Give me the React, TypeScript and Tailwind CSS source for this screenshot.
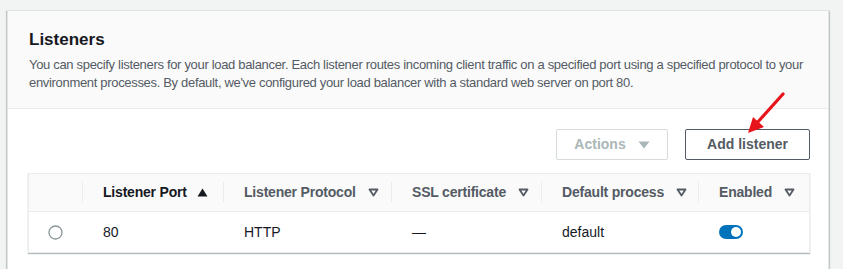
import React from "react";

const font = { fontFamily: '"Liberation Sans", Arial, sans-serif' };

function SortDown() {
  return (
    <svg width="11" height="9" viewBox="0 0 11 9" className="ml-[12px] shrink-0">
      <path d="M1.5 1.5 H9.5 L5.5 7.5 Z" fill="none" stroke="#545b64" strokeWidth="1.8" strokeLinejoin="round" />
    </svg>
  );
}

function SortUp() {
  return (
    <svg width="11" height="9" viewBox="0 0 11 9" className="ml-[10px] shrink-0">
      <path d="M5.5 0.5 L10.5 8.5 H0.5 Z" fill="#16191f" />
    </svg>
  );
}

function HeaderCell({ label, active, divider = true }: { label: string; active?: boolean; divider?: boolean }) {
  return (
    <div className="relative flex items-center pl-[21px] h-full">
      {divider && <div className="absolute left-0 top-[8px] h-[20px] w-px bg-[#eaeded]" />}
      <span className={`text-[14px] font-bold tracking-[-0.2px] ${active ? "text-[#16191f]" : "text-[#545b64]"}`}>{label}</span>
      {active ? <SortUp /> : <SortDown />}
    </div>
  );
}

export default function App() {
  return (
    <div style={font} className="relative w-[843px] h-[269px] overflow-hidden bg-[#f2f3f3] pt-[10px] pl-[7px] pr-[14px]">
      <div className="h-[300px] bg-white border border-[#e1e4e4] shadow-[0_1px_1px_0_rgba(0,28,36,0.3),1px_1px_1px_0_rgba(0,28,36,0.15),-1px_1px_1px_0_rgba(0,28,36,0.15)]">
        <div className="bg-[#fafafa] border-b border-[#eaeded] pl-[21px] pr-[8px] pt-[18px] pb-[16px]">
          <h2 className="text-[17px] leading-[22px] font-bold text-[#16191f]">Listeners</h2>
          <p className="mt-[5px] text-[13px] leading-[18px] tracking-[-0.32px] text-[#545b64]">
            You can specify listeners for your load balancer. Each listener routes incoming client traffic on a specified port using a specified protocol to your environment processes. By default, we've configured your load balancer with a standard web server on port 80.
          </p>
        </div>
        <div className="pl-[20px] pr-[18px] pt-[20px]">
          <div className="flex justify-end gap-[17px]">
            <button className="h-[31px] w-[112px] flex items-center justify-center gap-[12px] border border-[#d5dbdb] rounded-[2px] bg-white text-[14px] font-bold text-[#aab7b8]">
              Actions
              <svg width="12" height="8" viewBox="0 0 12 8">
                <path d="M0.5 0.5 H11.5 L6 7.5 Z" fill="#aab7b8" />
              </svg>
            </button>
            <button className="h-[31px] w-[125px] flex items-center justify-center border border-[#545b64] rounded-[2px] bg-white text-[14px] font-bold text-[#545b64]">
              Add listener
            </button>
          </div>
          <div className="mt-[13px] border border-[#eaeded] shadow-[0_1px_1px_0_rgba(0,28,36,0.3)] bg-white">
            <div className="grid grid-cols-[53px_141px_168px_150px_157px_110px] h-[38px] bg-[#fafafa] border-b border-[#eaeded]">
              <div />
              <HeaderCell label="Listener Port" active />
              <HeaderCell label="Listener Protocol" />
              <HeaderCell label="SSL certificate" />
              <HeaderCell label="Default process" />
              <HeaderCell label="Enabled" />
            </div>
            <div className="grid grid-cols-[53px_141px_168px_150px_157px_110px] h-[40px] items-center text-[14px] text-[#16191f]">
              <div className="flex justify-center">
                <svg width="15" height="15" viewBox="0 0 15 15">
                  <circle cx="7.5" cy="7.5" r="6.5" fill="white" stroke="#879596" strokeWidth="1.3" />
                </svg>
              </div>
              <div className="pl-[21px]">80</div>
              <div className="pl-[21px]">HTTP</div>
              <div className="pl-[21px]">—</div>
              <div className="pl-[21px]">default</div>
              <div className="pl-[21px] flex items-center">
                <div className="w-[24px] h-[14px] rounded-full bg-[#0073bb] flex items-center justify-end pr-[2px]">
                  <div className="w-[10px] h-[10px] rounded-full bg-white" />
                </div>
              </div>
            </div>
          </div>
        </div>
      </div>
      <svg className="absolute left-[740px] top-[88px]" width="50" height="50" viewBox="0 0 50 50">
        <line x1="43" y1="6" x2="16" y2="36" stroke="#e8141c" strokeWidth="3.2" strokeLinecap="round" />
        <path d="M8 45 L13 29 L24 39 Z" fill="#e8141c" />
      </svg>
    </div>
  );
}
